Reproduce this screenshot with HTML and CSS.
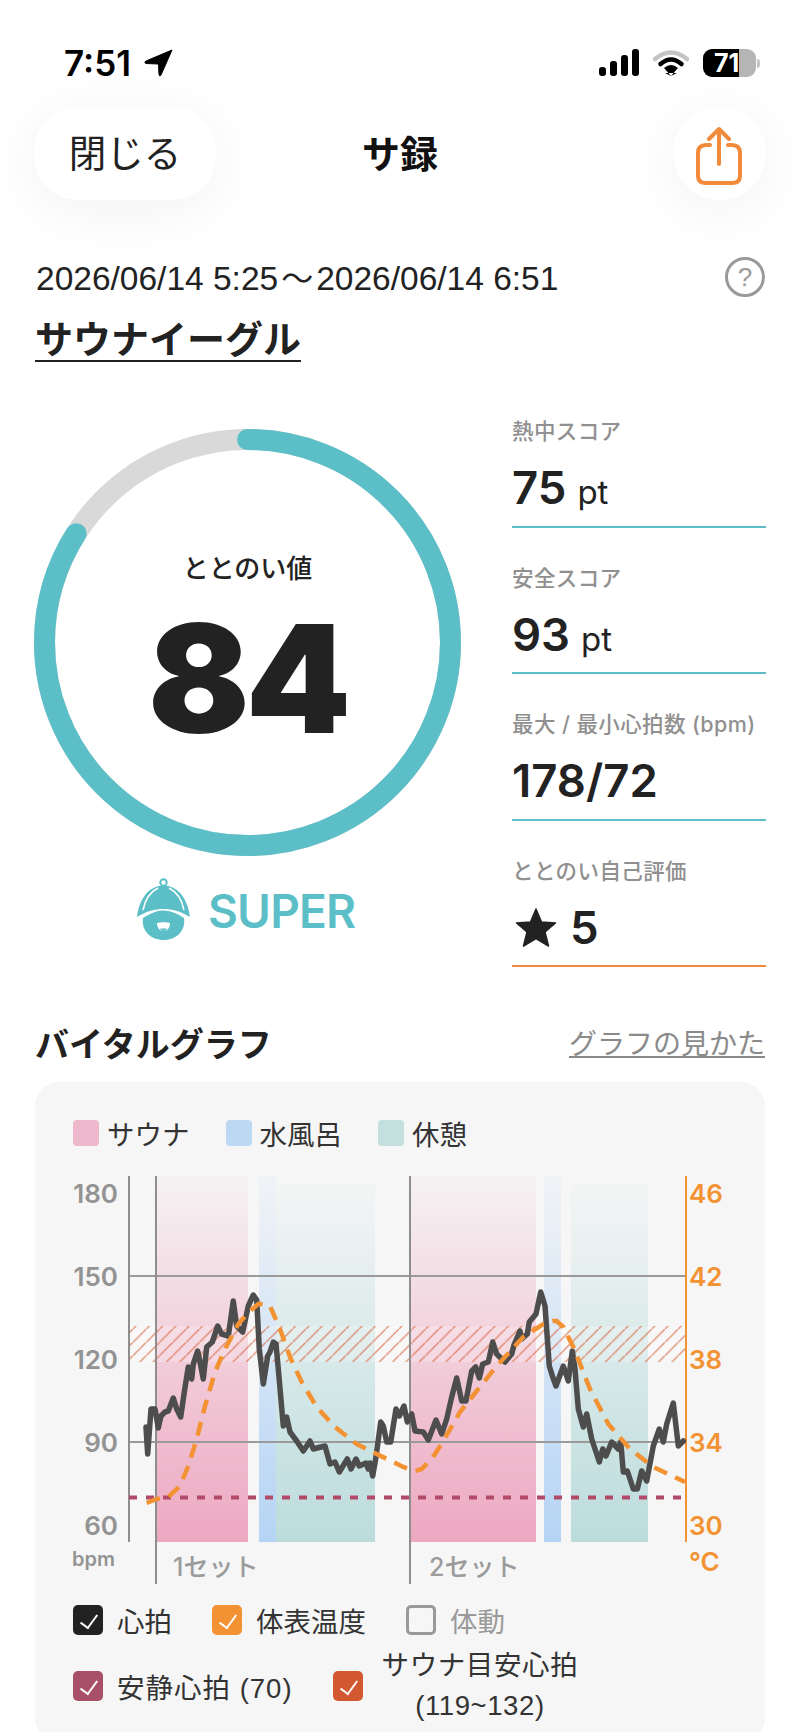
FILE: index.html
```html
<!DOCTYPE html>
<html lang="ja">

  <head>
    <meta charset="UTF-8">
    <title>サ録</title>
    <link rel="stylesheet" href="styles.css">
  </head>

  <body>
    <div id="wrap">
      <div class="status">
        <div class="status-time">
          <span>7:51</span>
          <svg width="29" height="28" viewBox="0 0 29 28"><path d="M28 1 L17 26 Q15.500 28 15 25.500 L14.500 15 L2 14.500 Q-.500 13.500 2 12 Z" fill="#000" stroke="#000" stroke-linejoin="round"/></svg>
        </div>
        <div class="status-icons">
          <div class="signal"><i></i><i></i><i></i><i></i></div>
          <svg width="36" height="27" viewBox="0 0 36 27">
            <path d="M2 10 Q18 -3 34 10" fill="none" stroke="#c4c4c4" stroke-width="4.500" stroke-linecap="round"/>
            <path d="M7.500 15 Q18 6 28.500 15" fill="none" stroke="#000" stroke-width="4.500" stroke-linecap="round"/>
            <path d="M12 24 L18 27 L24 24 Z M11 19 Q18 13 25 19 L18 27 Z" fill="#000"/>
          </svg>
          <div class="battery"><div class="battery-body"><span>71</span></div><i></i></div>
        </div>
      </div>

      <div class="nav">
        <div class="nav-left"><a class="btn-close">閉じる</a></div>
        <div class="nav-title">サ録</div>
        <div class="nav-right">
          <a class="btn-share">
            <svg width="48" height="60" viewBox="0 0 48 60" fill="none" stroke="#f28a3c" stroke-width="4" stroke-linecap="round" stroke-linejoin="round">
              <path d="M15 19 H11 Q3 19 3 27 V50 Q3 57 11 57 H37 Q45 57 45 50 V27 Q45 19 37 19 H33"/>
              <path d="M24 38 V3 M14 13 L24 3 L34 13"/>
            </svg>
          </a>
        </div>
      </div>

      <div class="meta">
        <div class="meta-date">2026/06/14 5:25<span class="meta-tilde">～</span>2026/06/14 6:51</div>
        <div class="help">?</div>
      </div>
      <div class="place">サウナイーグル</div>

      <div class="score">
        <div class="score-left">
          <div class="ring">
            <svg width="427" height="427" viewBox="0 0 427 427" fill="none" stroke-width="21">
              <circle cx="213.500" cy="213.500" r="203" stroke="#d9d9d9"/>
              <circle cx="213.500" cy="213.500" r="203" stroke="#5cbfc8" stroke-linecap="round" stroke-dasharray="1071 1276" transform="rotate(-90 213.500 213.500)"/>
            </svg>
            <div class="ring-text">
              <div class="ring-label">ととのい値</div>
              <div class="ring-value">84</div>
            </div>
          </div>
          <div class="rank">
            <svg width="70" height="75" viewBox="0 0 70 75">
              <circle cx="34.500" cy="9.500" r="3.200" fill="none" stroke="#5cbfc8" stroke-width="2"/>
              <path d="M8 44 C10 28 18 13 34.500 12.500 C51 13 59 28 61 44 C51 38 43 36 34.500 36 C26 36 18 38 8 44 Z" fill="#5cbfc8"/>
              <path d="M14 37 C16 27 21 19 29 15 M55 37 C53 27 48 19 40 15" fill="none" stroke="#fff" stroke-width="1.500"/>
              <path d="M14 45 C22 40 28 37.500 34.500 37.500 C41 37.500 48 40 55 45 C57 58 47 67 34.500 67 C22 67 12 58 14 45 Z" fill="#5cbfc8"/>
              <path d="M28 50 C31 49 38 49 41 50 C41 55 38 58 34.500 58 C31 58 28 55 28 50 Z" fill="#fff"/>
              <path d="M31 55.500 H38 C37 57.500 36 58 34.500 58 C33 58 32 57.500 31 55.500 Z" fill="#5cbfc8"/>
            </svg>
            <span>SUPER</span>
          </div>
        </div>
        <div class="stats">
          <div class="stat">
            <div class="stat-label">熱中スコア</div>
            <div class="stat-value">75<small>pt</small></div>
          </div>
          <div class="stat">
            <div class="stat-label">安全スコア</div>
            <div class="stat-value">93<small>pt</small></div>
          </div>
          <div class="stat">
            <div class="stat-label">最大 / 最小心拍数 (bpm)</div>
            <div class="stat-value">178/72</div>
          </div>
          <div class="stat stat-self">
            <div class="stat-label">ととのい自己評価</div>
            <div class="stat-value">
              <svg width="42" height="40" viewBox="0 0 42 40"><path d="M21 1 L26.500 14 L40.500 15 L30 24 L33.500 38 L21 30.500 L8.500 38 L12 24 L1.500 15 L15.500 14 Z" fill="#222" stroke="#222" stroke-width="1.500" stroke-linejoin="round"/></svg>
              5
            </div>
          </div>
        </div>
      </div>

      <div class="graph-head">
        <div class="graph-title">バイタルグラフ</div>
        <div class="graph-link">グラフの見かた</div>
      </div>

      <div class="card">
        <div class="legend">
          <div class="legend-item"><i class="sw-sauna"></i>サウナ</div>
          <div class="legend-item"><i class="sw-water"></i>水風呂</div>
          <div class="legend-item"><i class="sw-rest"></i>休憩</div>
        </div>

        <svg class="chart" width="730" height="420" viewBox="35 1170 730 420">
          <defs>
            <linearGradient id="g-sauna" x1="0" y1="0" x2="0" y2="1"><stop offset="0" stop-color="#eda8c1" stop-opacity=".05"/><stop offset="1" stop-color="#eda8c1"/></linearGradient>
            <linearGradient id="g-water" x1="0" y1="0" x2="0" y2="1"><stop offset="0" stop-color="#b5d4f5" stop-opacity=".08"/><stop offset="1" stop-color="#b5d4f5"/></linearGradient>
            <linearGradient id="g-rest" x1="0" y1="0" x2="0" y2="1"><stop offset="0" stop-color="#bcdcdc" stop-opacity=".05"/><stop offset="1" stop-color="#bcdcdc"/></linearGradient>
            <pattern id="hatch" patternUnits="userSpaceOnUse" width="13.300" height="13.300">
              <path d="M-1 14.300 L14.300 -1" stroke="#d9623a" stroke-width="1.400" stroke-opacity=".7"/>
            </pattern>
          </defs>

          <rect x="156" y="1177" width="92" height="366" fill="url(#g-sauna)"/>
          <rect x="259" y="1177" width="17" height="366" fill="url(#g-water)"/>
          <rect x="276" y="1185" width="99" height="358" fill="url(#g-rest)"/>
          <rect x="411" y="1177" width="125" height="366" fill="url(#g-sauna)"/>
          <rect x="544" y="1177" width="17" height="366" fill="url(#g-water)"/>
          <rect x="571" y="1185" width="77" height="358" fill="url(#g-rest)"/>

          <rect x="129" y="1327" width="557" height="36" fill="#fff" fill-opacity=".22"/>
          <rect x="129" y="1327" width="557" height="36" fill="url(#hatch)"/>

          <path class="grid" d="M129 1277 H686 M129 1443 H686"/>
          <path class="axis" d="M129 1177 V1543 M156 1177 V1585 M410 1177 V1585"/>
          <path class="axis-r" d="M686 1177 V1543"/>
          <path class="rest-line" d="M129 1498.500 H686"/>

          <polyline class="hr" points="146,1428 147.700,1455 151,1410 155,1410 158.300,1429 161,1417 165,1413 168.300,1412 173.300,1399 176.700,1410 180.700,1418 184.300,1393 188.300,1368 191.700,1380 193.300,1365 197.700,1352 200,1363 203.300,1380 206.700,1348 212.300,1343 217.700,1327 221.700,1335 228.300,1337 233.300,1302 236.700,1327 242.700,1333 248.300,1307 253.300,1296 256.700,1301 259.300,1350 263.300,1385 267.700,1357 270,1353 273.300,1343 276,1345 278.300,1370 283.300,1427 286.700,1418 290,1433 296.700,1442 303.300,1452 310,1442 313.300,1450 325,1447 330,1465 335,1463 339.300,1473 347.300,1460 351,1470 356,1460 359.300,1467 366,1464 368.300,1470 370,1464 372.700,1477 376,1458 380.700,1423 383.300,1427 386.700,1443 390.700,1443 396,1410 399.300,1417 404,1407 407.300,1423 411.700,1415 415,1432 423.300,1433 428.300,1441 436,1421 441.700,1435 446.700,1420 451.700,1398 456.700,1379 461.700,1402 466,1402 471.700,1372 475.700,1368 479.300,1379 482.700,1365 488.300,1363 492.700,1343 496.700,1355 505,1363 511.700,1355 514,1346 520,1332 521.700,1340 527.300,1335 529.300,1323 536,1315 540.700,1293 545,1307 549.300,1367 552.700,1378 556,1387 563.300,1367 568.300,1382 572.300,1352 575,1370 578.300,1410 583.300,1428 586.700,1415 591.700,1440 599.300,1463 602.700,1450 606,1457 611.700,1443 618.300,1450 620.700,1443 623.300,1473 627.300,1472 633.300,1490 637.300,1490 641.700,1472 646.700,1482 653.300,1447 659.300,1430 663.300,1443 666.700,1425 673.300,1404 678.300,1447 683.300,1442"/>
          <polyline class="temp" points="146.700,1504 156.700,1500 168.300,1498 180,1487 188.300,1467 196.700,1440 205,1407 215,1373 225,1350 238.300,1325 250,1312 258.300,1305 265,1305 270,1307 280,1330 290,1358 301.700,1383 316.700,1408 335,1428 356.700,1445 376.700,1455 403.300,1468 415,1472 421.700,1470 431.700,1460 443.300,1442 460,1413 476.700,1392 496.700,1367 523.300,1338 543.300,1325 553.300,1322 556.700,1322 563.300,1328 573.300,1348 590,1390 608.300,1425 630,1450 653.300,1468 685,1483"/>

          <g class="tick">
            <text x="118" y="1204">180</text>
            <text x="118" y="1287">150</text>
            <text x="118" y="1370">120</text>
            <text x="118" y="1453">90</text>
            <text x="118" y="1536">60</text>
          </g>
          <g class="tick-r">
            <text x="689" y="1204">46</text>
            <text x="689" y="1287">42</text>
            <text x="689" y="1370">38</text>
            <text x="689" y="1453">34</text>
            <text x="689" y="1536">30</text>
            <text x="689" y="1572">°C</text>
          </g>
          <text class="unit" x="72" y="1567">bpm</text>
          <text class="set" x="173" y="1577">1セット</text>
          <text class="set" x="429" y="1577">2セット</text>
        </svg>

        <div class="checks">
          <div class="check"><i class="c-hr"></i>心拍</div>
          <div class="check"><i class="c-temp"></i>体表温度</div>
          <div class="check check-off"><i></i>体動</div>
        </div>
        <div class="checks checks-2">
          <div class="check check-wide"><i class="c-rest"></i>安静心拍 (70)</div>
          <div class="check"><i class="c-sauna"></i><span class="check-2line">サウナ目安心拍<br>(119~132)</span></div>
        </div>
      </div>
    </div>
  </body>

</html>
```

FILE: styles.css
```css
* {
  box-sizing: border-box;
}

body {
  margin: 0;
  background: #fff;
  color: #222;
  font-family: "Liberation Sans", "Noto Sans CJK JP", sans-serif;
}

#wrap {
  width: 800px;
  height: 1732px;
  overflow: hidden;
}

/* status bar */
.status {
  display: flex;
  justify-content: space-between;
  height: 107px;
  padding: 49px 40px 0 64px;
}

.status-time {
  display: flex;
  align-items: flex-start;
  gap: 13px;
  color: #000;
  font: 600 35px/28px "Inter", sans-serif;
}

.status-icons {
  display: flex;
  align-items: flex-start;
  gap: 14px;
}

.signal {
  display: flex;
  align-items: flex-end;
  gap: 4px;
  height: 27px;
}

.signal i {
  width: 7px;
  border-radius: 3px;
  background: #000;
}

.signal i:nth-child(1) { height: 9px; }
.signal i:nth-child(2) { height: 15px; }
.signal i:nth-child(3) { height: 21px; }
.signal i:nth-child(4) { height: 27px; }

.battery {
  display: flex;
  align-items: center;
  gap: 1px;
  height: 28px;
}

.battery-body {
  width: 53px;
  height: 28px;
  padding-left: 11px;
  border-radius: 9px;
  background: linear-gradient(90deg, #000 68%, #b5b5b5 68%);
  color: #fff;
  font: 700 25px/28px "Inter", sans-serif;
}

.battery i {
  width: 3px;
  height: 9px;
  border-radius: 0 3px 3px 0;
  background: #c4c4c4;
}

/* nav */
.nav {
  display: grid;
  grid-template-columns: 1fr auto 1fr;
  align-items: center;
  height: 93px;
  padding: 0 34px;
}

.btn-close {
  display: inline-block;
  width: 182px;
  height: 93px;
  border-radius: 44px;
  background: #fff;
  box-shadow: 0 10px 60px rgba(0, 0, 0, .055);
  text-align: center;
  color: #222;
  font-size: 37.500px;
  line-height: 95px;
}

.nav-title {
  padding-bottom: 4px;
  color: #111;
  font-size: 38px;
  font-weight: 700;
}

.nav-right {
  text-align: right;
}

.btn-share {
  display: inline-flex;
  align-items: center;
  justify-content: center;
  width: 93px;
  height: 93px;
  padding: 4px 2px 0 0;
  border-radius: 50%;
  background: #fff;
  box-shadow: 0 10px 60px rgba(0, 0, 0, .055);
}

/* date and place */
.meta {
  display: flex;
  justify-content: space-between;
  align-items: center;
  height: 40px;
  margin-top: 57px;
  padding: 0 35px 0 36px;
}

.meta-date {
  padding-bottom: 3px;
  color: #222;
  font-size: 33.500px;
}

.meta-tilde {
  margin: 0 3px;
  font-size: 32px;
}

.help {
  width: 40px;
  height: 40px;
  border: 3px solid #999;
  border-radius: 50%;
  text-align: center;
  color: #999;
  font-size: 26px;
  line-height: 34px;
}

.place {
  display: inline-block;
  margin: 23px 0 0 35px;
  border-bottom: 2px solid #222;
  font-size: 38px;
  font-weight: 700;
  line-height: 40px;
}

/* score */
.score {
  display: flex;
  justify-content: space-between;
  margin-top: 67px;
  padding: 0 34px;
}

.score-left {
  width: 427px;
}

.ring {
  position: relative;
  height: 427px;
}

.ring-text {
  position: absolute;
  top: 120px;
  left: 0;
  right: 0;
  text-align: center;
}

.ring-label {
  font-size: 26px;
  font-weight: 500;
  line-height: 40px;
}

.ring-value {
  margin-top: 10px;
  font: 900 150px/160px "Inter", sans-serif;
  letter-spacing: -4px;
}

.rank {
  display: flex;
  align-items: center;
  gap: 9px;
  margin-top: 17px;
  padding-left: 95px;
  color: #5cbfc8;
  font: 600 46px/64px "Inter", sans-serif;
  letter-spacing: -.8px;
}

.stats {
  width: 254px;
  margin-top: -48px;
}

.stat {
  height: 146.500px;
  padding-top: 35px;
  border-bottom: 2px solid #5cbfc8;
}

.stat-self {
  border-color: #f28a3c;
}

.stat-label {
  color: #909090;
  font-family: "Inter", "Noto Sans CJK JP", sans-serif;
  font-size: 21.500px;
  font-weight: 500;
  letter-spacing: .4px;
  line-height: 30px;
  white-space: nowrap;
}

.stat-value {
  display: flex;
  align-items: baseline;
  margin-top: 12px;
  font: 600 45.500px/60px "Inter", sans-serif;
}

.stat-value small {
  margin-left: 11px;
  font-size: 33px;
  font-weight: 400;
}

.stat-self svg {
  align-self: center;
  margin: 0 13px 0 3px;
}

/* graph */
.graph-head {
  display: flex;
  justify-content: space-between;
  align-items: center;
  height: 40px;
  margin-top: 55px;
  padding: 0 35px;
}

.graph-title {
  font-size: 34px;
  font-weight: 700;
}

.graph-link {
  color: #8a8a8a;
  font-size: 28px;
  text-decoration: underline;
}

.card {
  width: 730px;
  height: 660px;
  margin: 20px 0 0 35px;
  padding-top: 36px;
  border-radius: 24px;
  background: #f6f6f6;
}

.legend {
  display: flex;
  gap: 36px;
  padding-left: 38px;
  height: 30px;
}

.legend-item {
  display: flex;
  align-items: center;
  gap: 8px;
  color: #333;
  font-size: 27.500px;
}

.legend-item i {
  width: 26px;
  height: 26px;
  border-radius: 4px;
}

.sw-sauna { background: #edb8cb; }
.sw-water { background: #bdd8f3; }
.sw-rest { background: #c3e0df; }

.chart {
  display: block;
  margin-top: 21px;
}

.chart text {
  font-family: "Inter", "Noto Sans CJK JP", sans-serif;
}

.grid {
  fill: none;
  stroke: #9a9a9a;
  stroke-width: 2;
}

.axis {
  fill: none;
  stroke: #8e8e8e;
  stroke-width: 2;
}

.axis-r {
  fill: none;
  stroke: #f39233;
  stroke-width: 2;
}

.rest-line {
  fill: none;
  stroke: #b04a68;
  stroke-width: 4;
  stroke-dasharray: 8 9;
}

.hr {
  fill: none;
  stroke: #4d4d4d;
  stroke-width: 5.500;
  stroke-linejoin: round;
  stroke-linecap: round;
}

.temp {
  fill: none;
  stroke: #f39233;
  stroke-width: 4.500;
  stroke-dasharray: 14 9;
}

.tick text {
  fill: #939393;
  font-size: 26px;
  font-weight: 600;
  text-anchor: end;
}

.tick-r text {
  fill: #f39233;
  font-size: 26px;
  font-weight: 600;
}

.chart .unit {
  fill: #939393;
  font-size: 20px;
  font-weight: 600;
}

.chart .set {
  fill: #9b9b9b;
  font-size: 25px;
  font-weight: 500;
}

.checks {
  display: flex;
  align-items: center;
  gap: 40px;
  height: 30px;
  margin-top: 16px;
  padding-left: 38px;
}

.checks-2 {
  margin-top: 36px;
}

.check {
  display: flex;
  align-items: center;
  gap: 14px;
  color: #333;
  font-size: 27.500px;
  white-space: nowrap;
}

.check-off {
  color: #9a9a9a;
}

.check-wide {
  letter-spacing: 1px;
}

.check i {
  position: relative;
  flex: none;
  width: 30px;
  height: 30px;
  border: 3px solid #999;
  border-radius: 5px;
}

.check i.c-hr,
.check i.c-temp,
.check i.c-rest,
.check i.c-sauna {
  border: 0;
}

.check i.c-hr::after,
.check i.c-temp::after,
.check i.c-rest::after,
.check i.c-sauna::after {
  content: "";
  position: absolute;
  top: 6px;
  left: 11px;
  width: 8px;
  height: 15px;
  border: solid #fff;
  border-width: 0 2px 2px 0;
  transform: rotate(36deg);
}

.c-hr { background: #222; }
.c-temp { background: #f39233; }
.c-rest { background: #a84f69; }
.c-sauna { background: #d2582f; }

.check-2line {
  margin-left: 5px;
  text-align: center;
  letter-spacing: .6px;
  line-height: 40px;
}
```
